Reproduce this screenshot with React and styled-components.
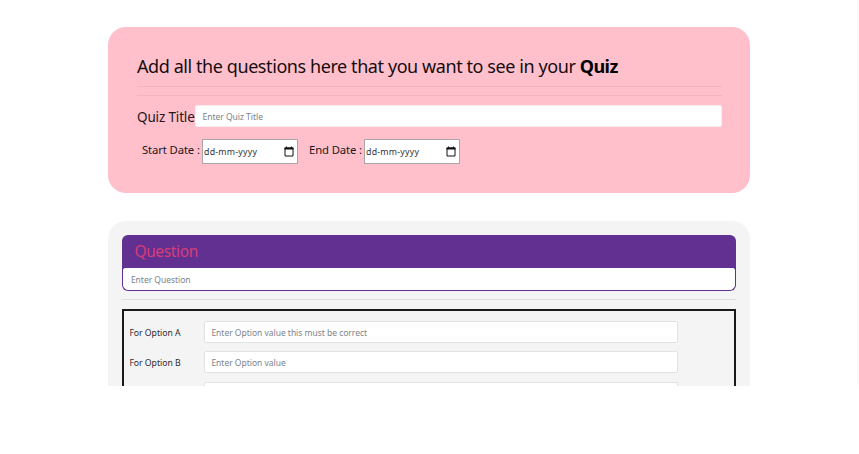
import React from "react";
import styled, { createGlobalStyle } from "styled-components";

const GlobalStyle = createGlobalStyle`
  *, *::before, *::after { box-sizing: border-box; }
  body { margin: 0; background: #fff; color: #212529; font-family: "Noto Sans", sans-serif; }
`;

const Viewport = styled.main`
  width: 858px;
  height: 386px;
  padding: 27px 106.6px 0 108.4px;
  overflow: hidden;
  border-right: 1px solid #f7f7f7;
`;

const TitleCard = styled.section`
  height: 165.5px;
  padding: 26px 28px 0 28.6px;
  border-radius: 18px;
  background: #ffc0cb;
`;

const Heading = styled.h1`
  margin: 0;
  height: 33px;
  font: 400 18px/26px "Noto Sans", sans-serif;
  letter-spacing: -0.42px;
  white-space: nowrap;
  color: #160d10;
  b { font-weight: 700; letter-spacing: -0.5px; color: #000; }
`;

const Divider = styled.hr`
  height: 1px;
  margin: ${(p) => p.$margin || "0"};
  border: 0;
  background: ${(p) => p.$color || "#f0b5bf"};
`;

const TitleRow = styled.div`
  display: flex;
  height: 22px;
`;

const TitleLabel = styled.label`
  flex: 0 0 58px;
  font-size: 13.5px;
  line-height: 24px;
  letter-spacing: -0.15px;
  white-space: nowrap;
  color: #24171b;
`;

const TextInput = styled.input`
  display: block;
  flex: 1;
  min-width: 0;
  width: 100%;
  height: 22px;
  padding: ${(p) => p.$padding || "0 6.5px"};
  border: 1px solid ${(p) => p.$border || "#dfe3e6"};
  border-radius: ${(p) => p.$radius || "2px"};
  outline: none;
  background: #fff;
  font: 400 8.5px/20px "Noto Sans", sans-serif;
  letter-spacing: -0.02px;
  &::placeholder { color: #7b838a; opacity: 1; }
`;

const DateRow = styled.div`
  display: flex;
  align-items: flex-start;
  margin-top: 12px;
  padding-left: 5px;
`;

const DateLabel = styled.label`
  width: ${(p) => p.$width};
  font-size: 11.3px;
  line-height: 22px;
  letter-spacing: -0.12px;
  white-space: nowrap;
  color: #24171b;
`;

const DateField = styled.div`
  display: flex;
  align-items: center;
  justify-content: space-between;
  width: 96px;
  height: 25px;
  margin-right: ${(p) => p.$gap || "0"};
  padding: 1px 3px 0 1px;
  border: 1px solid #aaa5a9;
  background: #fff;
  color: #343434;
  font-size: 8.8px;
  line-height: 22px;
  letter-spacing: 0.24px;
`;

const CalendarGlyph = styled.svg`
  width: 10px;
  height: 11px;
  margin-top: -2px;
`;

const QuestionCard = styled.section`
  height: 260px;
  margin-top: 28px;
  padding: 14px 14px 0;
  border-radius: 18px;
  background: #f5f4f5;
`;

const QuestionPanel = styled.div`
  height: 56px;
  padding: 0 1px 1px;
  border-radius: 6px;
  background: #623091;
`;

const QuestionTitle = styled.h2`
  height: 33px;
  margin: 0;
  padding-left: 11px;
  color: #d73d79;
  font: 400 15.5px/33px "Noto Sans", sans-serif;
  letter-spacing: -0.36px;
`;

const Options = styled.div`
  display: flex;
  flex-direction: column;
  gap: 8.3px;
  height: 200px;
  padding: 10.5px 0 0 5px;
  border: 2px solid #1c191c;
`;

const OptionRow = styled.div`
  display: grid;
  grid-template-columns: 74.5px 474px;
  height: 22px;
`;

const OptionLabel = styled.label`
  font-size: 8.7px;
  line-height: 24px;
  letter-spacing: -0.04px;
  color: #2b2c2e;
`;

function DatePicker({ gap }) {
  return (
    <DateField $gap={gap}>
      <span>dd-mm-yyyy</span>
      <CalendarGlyph viewBox="0 0 10 11" aria-hidden="true">
        <path d="M1 2h8v8H1z" fill="none" stroke="#111" strokeWidth="1" />
        <path d="M.5 1.5h9v2h-9zM2 .5h1v1H2zM7 .5h1v1H7z" fill="#111" />
      </CalendarGlyph>
    </DateField>
  );
}

const options = [
  { id: "a", label: "For Option A", placeholder: "Enter Option value this must be correct" },
  { id: "b", label: "For Option B", placeholder: "Enter Option value" },
  { id: "c" },
];

export default function App() {
  return (
    <>
      <GlobalStyle />
      <Viewport>
        <TitleCard>
          <Heading>
            Add all the questions here that you want to see in your <b>Quiz</b>
          </Heading>
          <Divider />
          <Divider $margin="8px 0 9px" />
          <TitleRow>
            <TitleLabel>Quiz Title</TitleLabel>
            <TextInput placeholder="Enter Quiz Title" $border="#f8edf0" />
          </TitleRow>
          <DateRow>
            <DateLabel $width="60px">Start Date :</DateLabel>
            <DatePicker gap="11px" />
            <DateLabel $width="55px">End Date :</DateLabel>
            <DatePicker />
          </DateRow>
        </TitleCard>
        <QuestionCard>
          <QuestionPanel>
            <QuestionTitle>Question</QuestionTitle>
            <TextInput
              placeholder="Enter Question"
              $border="#fff"
              $radius="2px 2px 5px 5px"
              $padding="1.5px 6.5px 0"
            />
          </QuestionPanel>
          <Divider $margin="8px 0 9px" $color="#e0dfe0" />
          <Options>
            {options.map((option) => (
              <OptionRow key={option.id}>
                <OptionLabel>{option.label}</OptionLabel>
                <TextInput placeholder={option.placeholder} $padding="1px 6.5px 0" />
              </OptionRow>
            ))}
          </Options>
        </QuestionCard>
      </Viewport>
    </>
  );
}
